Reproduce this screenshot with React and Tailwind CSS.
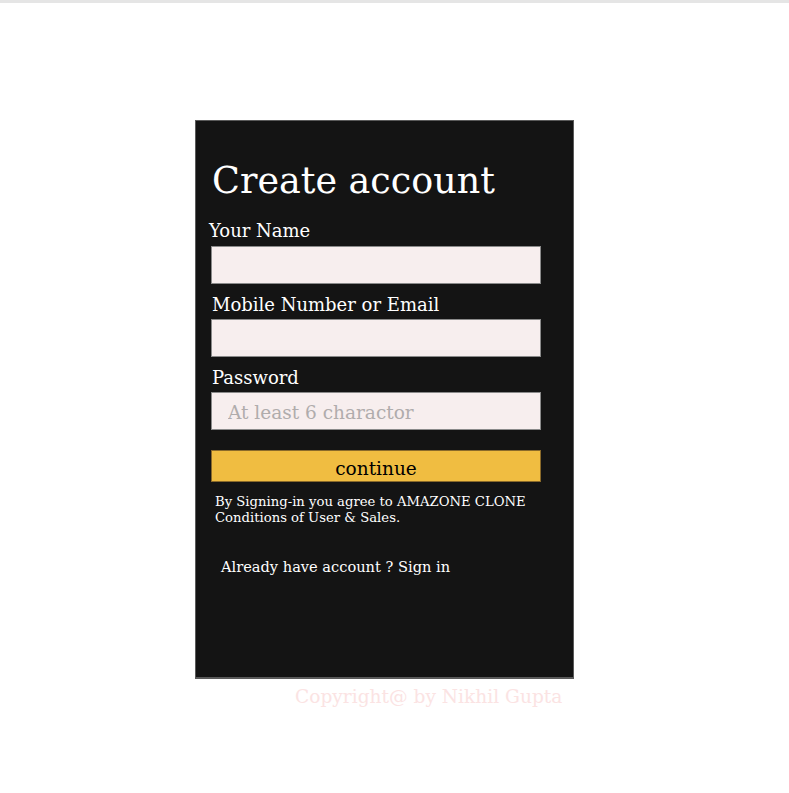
import React from 'react';

function App() {
  const serif = { fontFamily: '"DejaVu Serif", "Liberation Serif", serif' };

  return (
    <div className="min-h-[793px] w-full bg-white" style={serif}>
      <div className="h-[3px] w-full bg-[#e5e5e5]" />
      <div className="ml-[195px] mt-[117px] flex h-[559px] w-[379px] flex-col border border-b-2 border-[#5a5a5a] bg-[#141414] pl-[15px] pt-[36px]">
        <h1 className="text-[36.5px] leading-[48px] text-white ml-[1px]">Create account</h1>
        <label className="mt-[15px] block text-[18px] leading-[22px] text-white -ml-[2px]">Your Name</label>
        <input className="mt-[4px] h-[38px] w-[330px] border border-[#8a8a8a] bg-[#f7eeee] px-4 outline-none" />
        <label className="mt-[10px] block text-[18px] leading-[22px] text-white ml-[1px]">Mobile Number or Email</label>
        <input className="mt-[3px] h-[38px] w-[330px] border border-[#8a8a8a] bg-[#f7eeee] px-4 outline-none" />
        <label className="mt-[10px] block text-[18px] leading-[22px] text-white ml-[1px]">Password</label>
        <input
          type="password"
          placeholder="At least 6 charactor"
          className="mt-[3px] h-[38px] w-[330px] border border-[#8a8a8a] bg-[#f7eeee] px-4 pt-[3px] text-[18.5px] outline-none placeholder:text-[#b0acac]"
          style={serif}
        />
        <button className="mt-[20px] h-[32px] w-[330px] border border-[#8a6a2a] bg-[#f0bd41] pt-[4px] text-[18.5px] text-black" style={serif}>
          continue
        </button>
        <p className="mt-[12px] pl-[4px] text-[13.2px] leading-[16px] text-white">
          By Signing-in you agree to AMAZONE CLONE
          <br />
          Conditions of User &amp; Sales.
        </p>
        <p className="mt-[31px] pl-[10px] text-[14.6px] leading-[20px] text-white">Already have account ? Sign in</p>
      </div>
      <p className="ml-[295px] mt-[6px] text-[18.6px] leading-[24px] text-[#fbe3e3]">Copyright@ by Nikhil Gupta</p>
    </div>
  );
}

export default App;
